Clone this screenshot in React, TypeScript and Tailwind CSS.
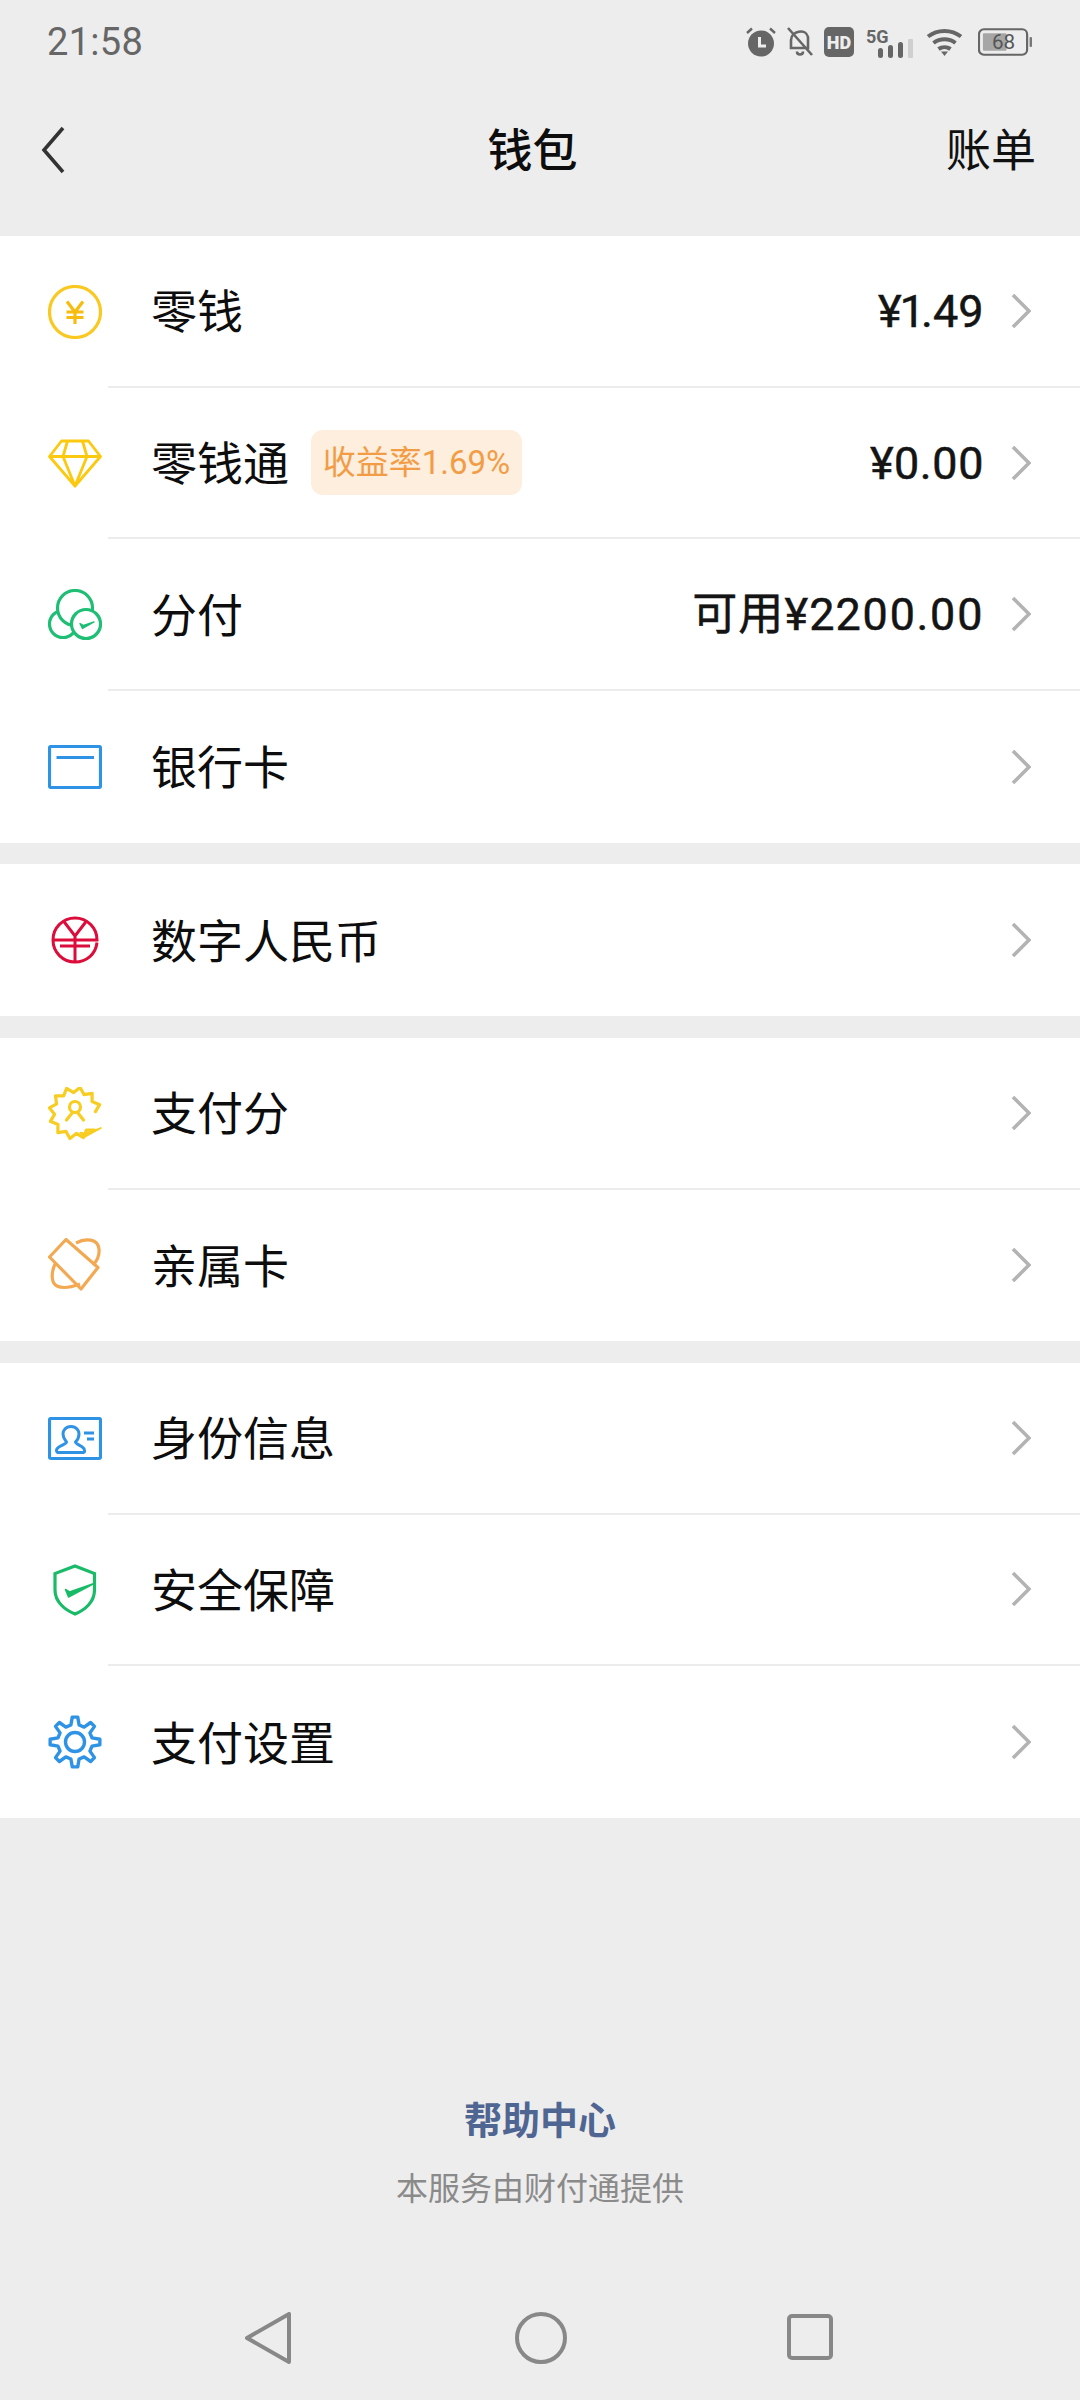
import React from "react";

const sans = "[font-family:'Roboto','Noto_Sans_CJK_SC',sans-serif]";

function ringPoints(n: number, outer: number, inner: number, cx: number, cy: number, start: number, count: number) {
  const pts: string[] = [];
  for (let i = 0; i < count; i++) {
    const a = start + (i * Math.PI) / n;
    const r = i % 2 === 0 ? outer : inner;
    pts.push(`${(cx + r * Math.cos(a)).toFixed(2)},${(cy + r * Math.sin(a)).toFixed(2)}`);
  }
  return pts.join(" ");
}

function gearPoints(n: number, outer: number, inner: number, cx: number, cy: number) {
  const pts: string[] = [];
  const step = (2 * Math.PI) / n;
  for (let i = 0; i < n; i++) {
    const a = -Math.PI / 2 + i * step;
    const list: [number, number][] = [
      [inner, a - step * 0.3],
      [outer, a - step * 0.14],
      [outer, a + step * 0.14],
      [inner, a + step * 0.3],
    ];
    list.forEach(([r, t]) => pts.push(`${(cx + r * Math.cos(t)).toFixed(2)},${(cy + r * Math.sin(t)).toFixed(2)}`));
  }
  return pts.join(" ");
}

const Coin = () => (
  <svg width="54" height="54" viewBox="0 0 54 54" fill="none">
    <circle cx="27" cy="27" r="25.5" stroke="#f9c921" strokeWidth="3.2" />
    <path d="M19 16.5L27 27L35 16.5M18.5 27H35.5M18.5 32.5H35.5M27 27V39" stroke="#f7bc10" strokeWidth="3.2" />
  </svg>
);
const Diamond = () => (
  <svg width="54" height="50" viewBox="0 0 54 50" fill="none" stroke="#fbc90f" strokeWidth="2.8" strokeLinejoin="round">
    <path d="M13.5 2H40.5L52.5 17.5L27 47L1.5 17.5Z" />
    <path d="M1.5 17.5H52.5M19.5 2L15 17.5L27 47L39 17.5L34.5 2" />
  </svg>
);
const Fen = () => (
  <svg width="54" height="52" viewBox="0 0 54 52" fill="none" stroke="#1fbe75" strokeWidth="3.2">
    <circle cx="15" cy="35" r="13.5" fill="white" />
    <circle cx="27" cy="19" r="17.5" fill="white" />
    <circle cx="38" cy="35" r="14.5" fill="white" />
    <path d="M32 34.5L34.5 39.5L46 33L35.5 36.5Z" fill="#1fbe75" strokeWidth="1.4" strokeLinejoin="round" />
  </svg>
);
const Card = () => (
  <svg width="54" height="44" viewBox="0 0 54 44" fill="none" stroke="#2f93e5" strokeWidth="3.2">
    <rect x="1.5" y="1.5" width="51" height="41" rx="1.5" />
    <path d="M8.5 12.5H46" />
  </svg>
);
const Rmb = () => (
  <svg width="48" height="48" viewBox="0 0 48 48" fill="none" stroke="#dc0c3b" strokeWidth="3">
    <path d="M46 26.5C44.8 38 35.5 46 24 46C11.8 46 2 36.2 2 24C2 11.8 11.8 2 24 2C36.2 2 46 11.8 46 24H2" />
    <path d="M12.5 5L24 20L35.5 5M24 20V46M9 30H39" />
  </svg>
);
const Score = () => (
  <svg width="54" height="54" viewBox="0 0 54 54" fill="none" stroke="#f8cd22" strokeWidth="3.2" strokeLinejoin="round" strokeLinecap="round">
    <polyline points={ringPoints(12, 26, 20.5, 27, 26, 0.72, 22)} />
    <circle cx="27" cy="20" r="5.5" />
    <path d="M18.5 33L24.5 25.5M35.5 33L29.5 25.5" />
    <path d="M32 45.5L36.5 50L53 41L38 46.5Z" fill="#f8cd22" strokeWidth="1.5" />
  </svg>
);
const Family = () => (
  <svg width="54" height="54" viewBox="0 0 54 54" fill="none" stroke="#f3a952" strokeWidth="3.2" strokeLinejoin="round">
    <path d="M18 1.5L50 29.5L33 51L1.5 19Z" />
    <path d="M28 5C38 -0.5 50 1 51 11C51.7 18 48 24 45 27" />
    <path d="M7 26C3 35 3 45 9 48C15 51 24 49 32 46" />
  </svg>
);
const Identity = () => (
  <svg width="54" height="44" viewBox="0 0 54 44" fill="none" stroke="#2f93e5" strokeWidth="3.2">
    <rect x="1.5" y="1.5" width="51" height="40" rx="1.5" />
    <path d="M23 9.5C17.5 9.5 15 13.5 15 17C15 21 17.5 23.5 18.5 25C18.5 27.5 9 29 8.5 33C8.3 35 9.5 35.5 11 35.5H34C36 35.5 37 35 36.5 33C36 29 27.5 27.5 27.5 25C29 23.5 31 21 31 17C31 13.5 28.5 9.5 23 9.5Z" strokeWidth="3" />
    <path d="M36 16H46M39 22H46" strokeWidth="3" />
  </svg>
);
const Shield = () => (
  <svg width="44" height="52" viewBox="0 0 44 52" fill="none" stroke="#19bb68" strokeWidth="3.2">
    <path d="M22 2L41.5 9.5V26C41.5 38 32 46 22 50C12 46 2 38 2 26V9.5Z" />
    <path d="M12.5 25.5L15.5 33L41 19.5L16.5 28Z" fill="#19bb68" strokeWidth="1.5" strokeLinejoin="round" />
  </svg>
);
const Gear = () => (
  <svg width="54" height="54" viewBox="0 0 54 54" fill="none" stroke="#2f93e5" strokeWidth="3.4" strokeLinejoin="round">
    <polygon points={gearPoints(8, 25, 17.5, 27, 27)} />
    <circle cx="27" cy="27" r="9.5" />
  </svg>
);

const Chevron = () => (
  <svg width="20" height="36" viewBox="0 0 20 36" fill="none" stroke="#b3b3b3" strokeWidth="3.6" className="shrink-0">
    <path d="M2 2L18 18L2 34" />
  </svg>
);

type RowProps = { icon: React.ReactNode; label: string; value?: string; wideValue?: boolean; badge?: string; divider?: boolean };

function Row({ icon, label, value, wideValue, badge, divider = true }: RowProps) {
  return (
    <div className="flex h-[151.7px] bg-white">
      <div className="flex w-[108px] shrink-0 items-center pl-[48px]">
        <div className="flex w-[54px] justify-center">{icon}</div>
      </div>
      <div className={`flex min-w-0 flex-1 items-center pl-[43px] pr-[49px] ${divider ? "border-b-2 border-[#ececec]" : ""}`}>
        <span className="pt-[3px] text-[46px] leading-none text-[#0d0d0d]">{label}</span>
        {badge && (
          <span className="ml-[22px] flex h-[65px] w-[211px] items-center justify-center rounded-[12px] bg-[#fdeede] text-[33px] text-[#f29d46]">
            {badge}
          </span>
        )}
        <span className={`ml-auto mr-[27px] pt-[1px] text-[45px] leading-none text-[#141414] [font-variant-numeric:proportional-nums] [-webkit-text-stroke:0.5px_#141414] ${wideValue ? "tracking-[1.1px]" : "tracking-[0px]"}`}>{value}</span>
        <Chevron />
      </div>
    </div>
  );
}

const Gap = () => <div className="h-[21.7px]" />;

function StatusIcons() {
  return (
    <div className="flex items-center text-[#666666]">
      <svg width="30" height="30" viewBox="0 0 30 30" className="mr-[10px]">
        <circle cx="15" cy="16.5" r="13" fill="#666" />
        <path d="M1 6L6 1.5M29 6L24 1.5" stroke="#666" strokeWidth="2.4" fill="none" />
        <path d="M13.5 10V19H20" stroke="#eee" strokeWidth="3" fill="none" />
      </svg>
      <svg width="28" height="30" viewBox="0 0 28 30" className="mr-[10px]" fill="none" stroke="#666" strokeWidth="2.6">
        <path d="M5 21V13C5 4 20 1 22 10V21H5ZM2 1L26 28M11 24.5C11 28.5 17 28.5 17 24.5" />
      </svg>
      <svg width="30" height="30" viewBox="0 0 30 30" className="mr-[12px]">
        <rect width="30" height="30" rx="5" fill="#666" />
        <text x="15" y="21.5" textAnchor="middle" fontSize="18" fontWeight="900" fill="#eee" fontFamily="Roboto">HD</text>
      </svg>
      <svg width="48" height="36" viewBox="0 0 48 36" className="mr-[12px]">
        <text x="0" y="19" fontSize="18" fontWeight="700" fill="#666" fontFamily="Roboto">5G</text>
        <rect x="12" y="24" width="5" height="10" rx="2.5" fill="#666" />
        <rect x="22" y="21" width="5" height="13" rx="2.5" fill="#666" />
        <rect x="32" y="18" width="5" height="16" rx="2.5" fill="#666" />
        <rect x="42" y="15" width="5" height="19" rx="1" fill="#cfcfcf" />
      </svg>
      <svg width="37" height="28" viewBox="0 0 36 28" className="mr-[15px]" fill="none" stroke="#666" strokeWidth="4">
        <path d="M1.5 8.5C11 1 25 1 34.5 8.5M7 15C13.5 10 22.5 10 29 15M12 21C15.5 18.5 20.5 18.5 24 21" />
        <path d="M14.5 23.5L18 28L21.5 23.5Z" fill="#666" stroke="none" />
      </svg>
      <svg width="55" height="28" viewBox="0 0 56 28">
        <rect x="1" y="1" width="49" height="26" rx="5" fill="none" stroke="#666" strokeWidth="2.2" />
        <rect x="5" y="5" width="24" height="18" rx="1" fill="#a6a6a6" />
        <rect x="52.5" y="9" width="2.5" height="10" rx="1" fill="#777" />
        <text x="26" y="21.5" textAnchor="middle" fontSize="21" fill="#555" fontFamily="Roboto">68</text>
      </svg>
    </div>
  );
}

export default function App() {
  return (
    <div className={`flex h-[2400px] w-[1080px] flex-col overflow-hidden bg-[#ededed] ${sans}`}>
      <div className="flex h-[84px] items-center justify-between pl-[47px] pr-[47px]">
        <span className="text-[38px] tracking-[0.3px] text-[#666666]">21:58</span>
        <StatusIcons />
      </div>
      <div className="flex h-[152px] items-start justify-between pl-[41px] pr-[44px] pt-[42px]">
        <div className="w-[78px]">
          <svg width="24" height="48" viewBox="0 0 24 48" fill="none" stroke="#333" strokeWidth="3.6">
            <path d="M22 2L3 24L22 46" />
          </svg>
        </div>
        <span className="text-[45px] font-medium leading-[52px] text-[#0d0d0d]">钱包</span>
        <span className="text-[45px] leading-[52px] text-[#111111]">账单</span>
      </div>

      <Row icon={<Coin />} label="零钱" value="¥1.49" />
      <Row icon={<Diamond />} label="零钱通" badge="收益率1.69%" value="¥0.00" />
      <Row icon={<Fen />} label="分付" value="可用¥2200.00" wideValue />
      <Row icon={<Card />} label="银行卡" divider={false} />
      <Gap />
      <Row icon={<Rmb />} label="数字人民币" divider={false} />
      <Gap />
      <Row icon={<Score />} label="支付分" />
      <Row icon={<Family />} label="亲属卡" divider={false} />
      <Gap />
      <Row icon={<Identity />} label="身份信息" />
      <Row icon={<Shield />} label="安全保障" />
      <Row icon={<Gear />} label="支付设置" divider={false} />

      <div className="mt-auto flex flex-col items-center">
        <span className="text-[38px] font-bold leading-[44px] text-[#4f6592]">帮助中心</span>
        <span className="mt-[26px] text-[32px] leading-[40px] text-[#8a8a8a]">本服务由财付通提供</span>
      </div>
      <div className="mt-[103px] flex h-[88px] items-start pl-[245px]">
        <svg width="46" height="52" viewBox="0 0 46 52" fill="none" stroke="#888" strokeWidth="4" strokeLinejoin="round">
          <path d="M44 2V50L2 26Z" />
        </svg>
        <svg width="52" height="52" viewBox="0 0 52 52" fill="none" stroke="#888" strokeWidth="4" className="ml-[224px]">
          <circle cx="26" cy="26" r="24" />
        </svg>
        <svg width="46" height="46" viewBox="0 0 46 46" fill="none" stroke="#888" strokeWidth="4" className="ml-[220px] mt-[2px]">
          <rect x="2" y="2" width="42" height="42" rx="3" />
        </svg>
      </div>
    </div>
  );
}
